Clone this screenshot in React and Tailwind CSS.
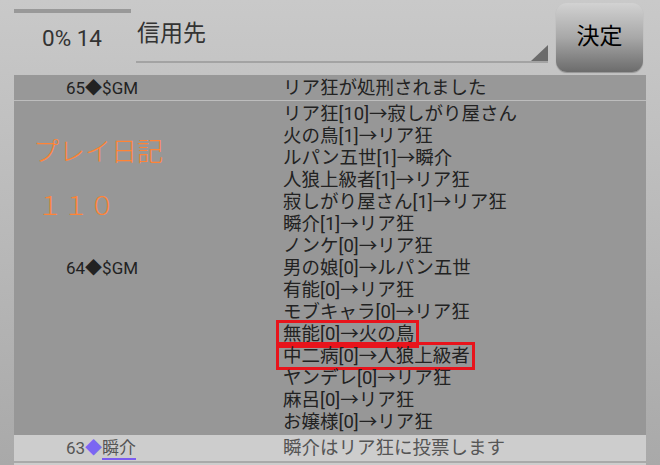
const FONT = { fontFamily: 'Roboto, "Noto Sans CJK JP", sans-serif' };

const votes = [
  "リア狂[10]→寂しがり屋さん",
  "火の鳥[1]→リア狂",
  "ルパン五世[1]→瞬介",
  "人狼上級者[1]→リア狂",
  "寂しがり屋さん[1]→リア狂",
  "瞬介[1]→リア狂",
  "ノンケ[0]→リア狂",
  "男の娘[0]→ルパン五世",
  "有能[0]→リア狂",
  "モブキャラ[0]→リア狂",
  "無能[0]→火の鳥",
  "中二病[0]→人狼上級者",
  "ヤンデレ[0]→リア狂",
  "麻呂[0]→リア狂",
  "お嬢様[0]→リア狂",
];

const marked = ["無能[0]→火の鳥", "中二病[0]→人狼上級者"];

export default function App() {
  return (
    <div
      className="h-[465px] w-[660px] overflow-hidden bg-gradient-to-b from-[#c9c9c9] to-[#a9a9a9] text-[#222]"
      style={FONT}
    >
      {/* Header */}
      <div className="flex h-[75px] items-start">
        <div className="flex w-[122px] shrink-0 flex-col pl-[14px] pt-[9px]">
          <div className="h-[4px] w-[117px] bg-[#999]" />
          <div className="mt-[12px] pl-[28px] text-[22.5px] leading-[26px] text-[#333]">0% 14</div>
        </div>
        <div className="relative ml-[14px] mt-[20px] flex h-[43px] w-[412px] items-start border-b-2 border-[#a3a3a3]">
          <span className="pl-px text-[23px] leading-[28px] text-[#333]">信用先</span>
          <svg className="absolute bottom-0 right-0" width="17" height="16" viewBox="0 0 17 16">
            <polygon points="17,0 17,16 0,16" fill="#6b6b6b" />
          </svg>
        </div>
        <button
          type="button"
          className="ml-[8px] mt-[3px] flex h-[69px] w-[87px] items-center justify-center rounded-[11px] bg-gradient-to-b from-[#d2d2d2] via-[#a8a8a8] to-[#6c6c6c] text-[23px] text-black shadow-[0_1px_1px_rgba(0,0,0,0.25)]"
        >
          決定
        </button>
      </div>

      {/* Log panel */}
      <div className="ml-[14px] w-[632px] text-[18.5px] leading-[22px]">
        <div className="flex h-[26px] items-center border-b border-[#bdbdbd] bg-[#989898]">
          <div className="w-[269px] pl-[52px] text-[17px]">65◆$GM</div>
          <div>リア狂が処刑されました</div>
        </div>

        <div className="relative flex h-[334px] bg-[#979797] pt-[2px]">
          <div className="w-[269px] shrink-0 pl-[52px] pt-[154px] text-[17px]">64◆$GM</div>
          <div className="flex flex-col">
            {votes.map((v) => (
              <div key={v} className="h-[22px] whitespace-nowrap">
                {marked.includes(v) ? (
                  <span className="-ml-[4px] pl-[4px] pr-[2px] outline-[3px] outline-offset-0 outline-[#e8141c] outline-solid">
                    {v}
                  </span>
                ) : (
                  v
                )}
              </div>
            ))}
          </div>

          {/* overlay stamp */}
          <div className="absolute left-[19px] top-[36px] font-light text-[#ff8436]">
            <div className="text-[26px] leading-[30px]">プレイ日記</div>
            <div className="mt-[24px] pl-[4px] text-[26px] leading-[30px]">１１０</div>
          </div>
        </div>

        <div className="flex h-[26px] items-center bg-[#cdcdcd] text-[#555]">
          <div className="w-[269px] pl-[52px] text-[17px]">
            63<span className="text-[#7b66f2]">◆</span>
            <span className="border-b-2 border-[#7b5cf0]">瞬介</span>
          </div>
          <div>瞬介はリア狂に投票します</div>
        </div>
        <div className="h-[2px] bg-[#a9a9a9]" />
        <div className="h-[20px] bg-[#cdcdcd]" />
      </div>
    </div>
  );
}
